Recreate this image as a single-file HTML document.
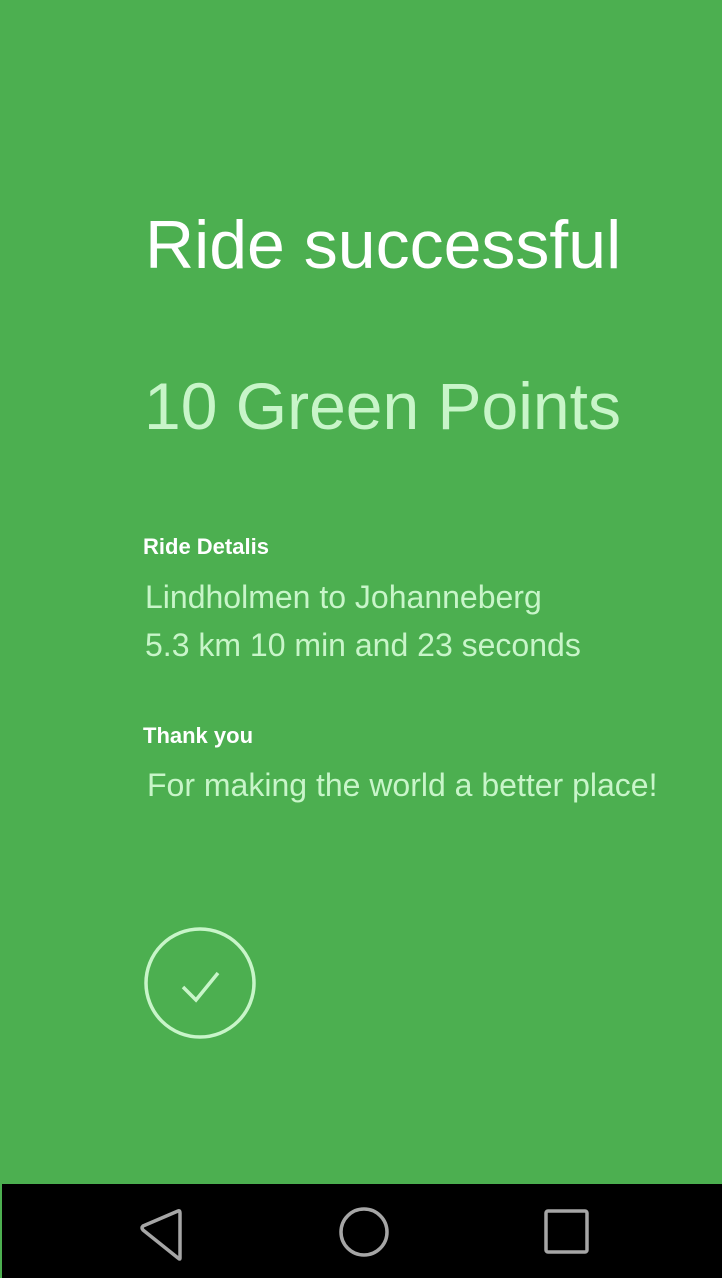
<!DOCTYPE html>
<html><head><meta charset="utf-8"><style>
html,body{margin:0;padding:0;}
body{width:722px;height:1278px;background:#4caf50;position:relative;overflow:hidden;font-family:"Liberation Sans",Arial,sans-serif;}
.t{position:absolute;line-height:1;white-space:nowrap;}
.w{color:#fff}.g{color:#c8f5c9}
.nav{position:absolute;left:2px;top:1184px;width:720px;height:94px;background:#000;}
</style></head><body>
<div class="t w" style="left:145px;top:211px;font-size:68px;">Ride successful</div>
<div class="t g" style="left:144px;top:373px;font-size:66px;">10 Green Points</div>
<div class="t w" style="left:143px;top:536px;font-size:22px;font-weight:bold;">Ride Detalis</div>
<div class="t g" style="left:145px;top:581px;font-size:32px;">Lindholmen to Johanneberg</div>
<div class="t g" style="left:145px;top:629px;font-size:32px;">5.3 km 10 min and 23 seconds</div>
<div class="t w" style="left:143px;top:725px;font-size:22px;font-weight:bold;">Thank you</div>
<div class="t g" style="left:147px;top:769px;font-size:32px;">For making the world a better place!</div>
<svg style="position:absolute;left:0;top:0" width="722" height="1184">
<circle cx="200" cy="983" r="54" fill="none" stroke="#c8f5c9" stroke-width="3.5"/>
<polyline points="183,987 196,1000 218,973" fill="none" stroke="#c8f5c9" stroke-width="3.5"/>
</svg>
<div class="nav">
<svg width="720" height="94" style="position:absolute;left:-2px;top:0">
<path d="M180 29 L180 74 Q180 76 178 74 L143 46 Q141 44 143 42 L178 27 Q180 26 180 29Z" fill="none" stroke="#a6a6a6" stroke-width="3.5" stroke-linejoin="round"/>
<ellipse cx="364" cy="48" rx="23" ry="23" fill="none" stroke="#a6a6a6" stroke-width="3.5"/>
<rect x="546" y="27" width="41" height="41" rx="2" fill="none" stroke="#a6a6a6" stroke-width="3.5"/>
</svg>
</div>
</body></html>
